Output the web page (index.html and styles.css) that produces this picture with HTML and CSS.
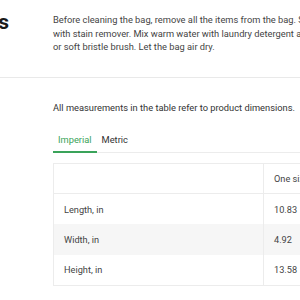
FILE: index.html
```html
<!DOCTYPE html>
<html>
<head>
<meta charset="utf-8">
<link rel="stylesheet" href="styles.css">
</head>
<body>
<div class="page">
  <section class="care">
    <h2 class="care-title">Care instructions</h2>
    <p class="care-text">Before cleaning the bag, remove all the items from the bag. Spot clean stains<br>with stain remover. Mix warm water with laundry detergent and clean with a sponge<br>or soft bristle brush. Let the bag air dry.</p>
  </section>
  <section class="sizes">
    <p class="sizes-note">All measurements in the table refer to product dimensions.</p>
    <div class="tabs">
      <span class="tab tab-active">Imperial</span>
      <span class="tab">Metric</span>
    </div>
    <table class="size-table">
      <tr class="head"><td class="c1"></td><td class="c2">One size</td></tr>
      <tr><td class="c1">Length, in</td><td class="c2">10.83</td></tr>
      <tr class="alt"><td class="c1">Width, in</td><td class="c2">4.92</td></tr>
      <tr><td class="c1">Height, in</td><td class="c2">13.58</td></tr>
    </table>
  </section>
</div>
</body>
</html>
```
FILE: styles.css
```css
html, body {
  margin: 0;
  padding: 0;
  background: #fff;
}
body {
  font-family: Roboto, "Noto Sans", sans-serif;
  overflow: hidden;
  width: 300px;
  height: 300px;
}
.page {
  width: 300px;
  overflow: hidden;
}
.care {
  display: flex;
  margin-left: -227px;
  width: 800px;
  padding: 13px 0 23px;
  border-bottom: 1px solid #e9e9e9;
}
.care-title {
  width: 236px;
  flex: none;
  margin: -3px 44px 0 0;
  text-align: right;
  font-size: 21px;
  line-height: 25px;
  font-weight: 700;
  color: #1a1a1a;
  white-space: nowrap;
}
.care-text {
  margin: 0;
  width: 520px;
  font-size: 9.3px;
  line-height: 13.7px;
  color: #444;
  white-space: nowrap;
}
.sizes {
  padding: 23px 0 0 53px;
}
.sizes-note {
  margin: 0;
  font-size: 9.3px;
  line-height: 13.7px;
  color: #333;
  white-space: nowrap;
}
.tabs {
  display: flex;
  margin-top: 18px;
  width: 500px;
  border-bottom: 1px solid #ececec;
}
.tab {
  padding: 0 5px 4px;
  margin-bottom: -1px;
  font-size: 9.3px;
  line-height: 13.7px;
  color: #333;
  border-bottom: 2px solid transparent;
}
.tab-active {
  color: #3aa35a;
  border-bottom-color: #3aa35a;
}
.size-table {
  margin-top: 10px;
  width: 420px;
  border-collapse: collapse;
  border: 1px solid #ececec;
  font-size: 9.2px;
  color: #444;
}
.size-table td {
  height: 30.5px;
  padding: 0 10px;
  box-sizing: border-box;
}
.size-table .c1 {
  width: 210px;
  border-right: 1px solid #ececec;
}
.size-table .head td {
  border-bottom: 1px solid #ececec;
}
.size-table .alt td {
  background: #f6f6f6;
}
```
